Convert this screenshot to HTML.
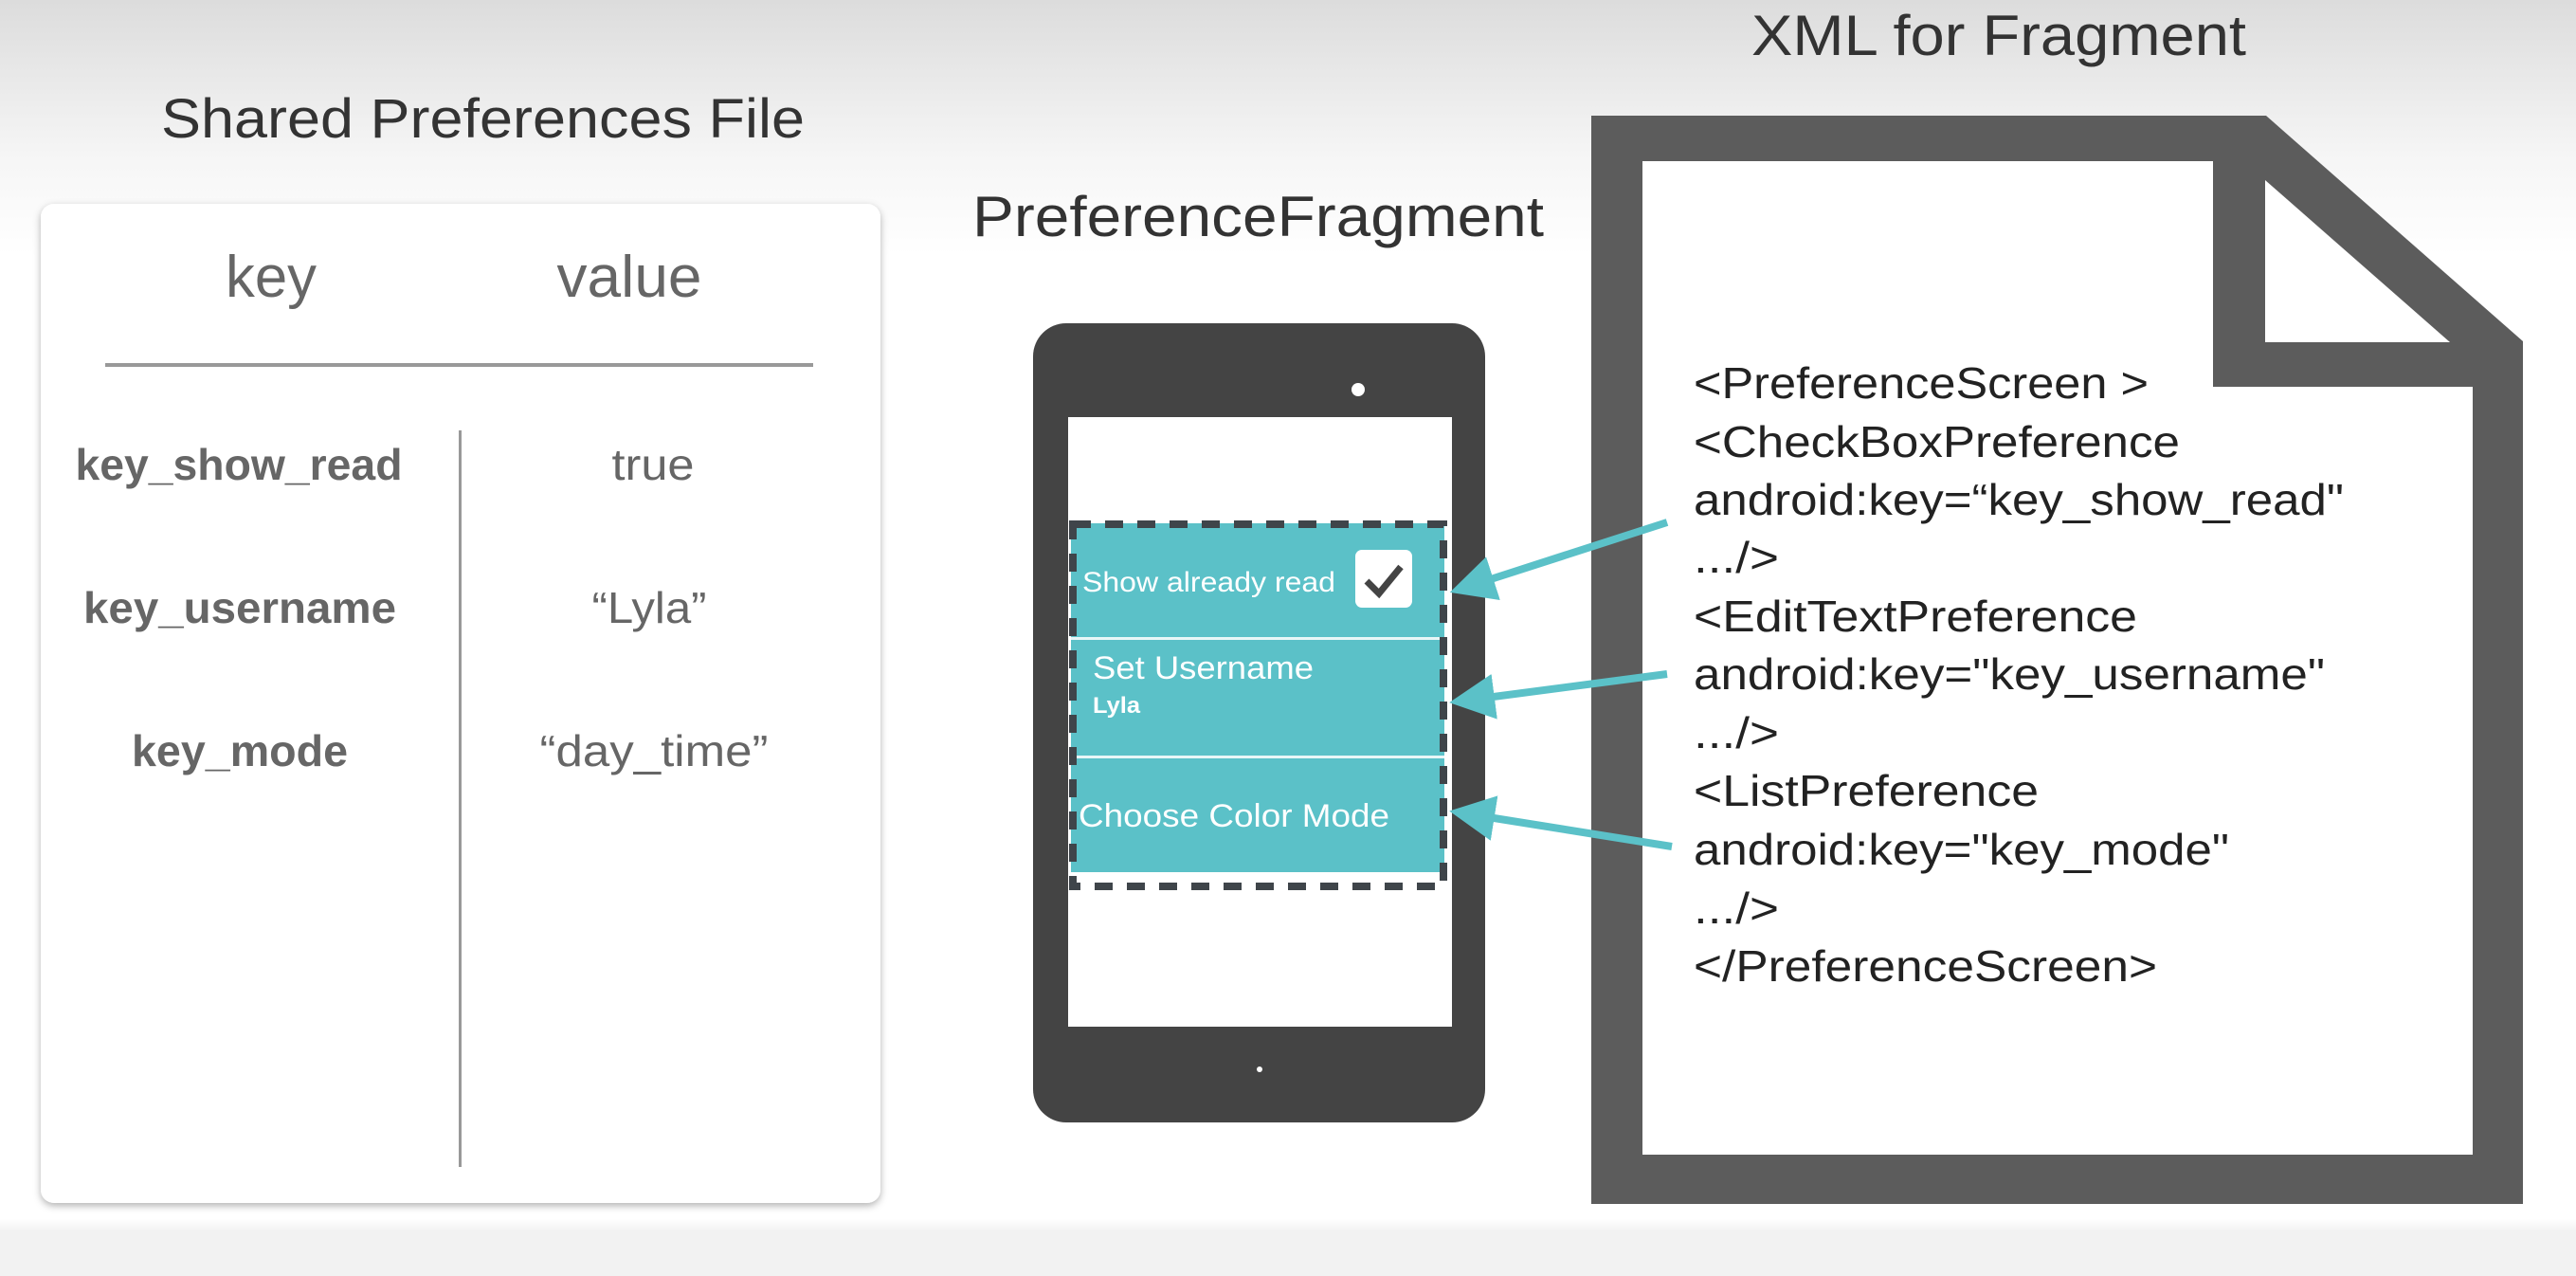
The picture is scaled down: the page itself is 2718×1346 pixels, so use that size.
<!DOCTYPE html>
<html><head><meta charset="utf-8"><style>
html,body{margin:0;padding:0;width:2718px;height:1346px;overflow:hidden;background:#fff}
svg{display:block}
text{font-family:"Liberation Sans",sans-serif}
</style></head><body>
<svg width="2718" height="1346" viewBox="0 0 2718 1346" xmlns="http://www.w3.org/2000/svg">
<defs>
<linearGradient id="bg" x1="0" y1="0" x2="0" y2="1">
<stop offset="0" stop-color="#dcdcdc"/><stop offset="0.12" stop-color="#f5f5f5"/><stop offset="0.2" stop-color="#ffffff"/>
<stop offset="0.955" stop-color="#ffffff"/><stop offset="0.965" stop-color="#f2f2f2"/><stop offset="1" stop-color="#f2f2f2"/>
</linearGradient>
<filter id="sh" x="-5%" y="-5%" width="110%" height="110%"><feDropShadow dx="0" dy="3" stdDeviation="4" flood-color="#000" flood-opacity="0.3"/></filter>
<marker id="ah" markerWidth="6" markerHeight="6" refX="4" refY="3" orient="auto" markerUnits="strokeWidth"><path d="M0,0 L6,3 L0,6 z" fill="#5bc1c8"/></marker>
</defs>
<rect width="2718" height="1346" fill="url(#bg)"/>

<text x="170" y="145" font-size="58" fill="#333" textLength="679" lengthAdjust="spacingAndGlyphs">Shared Preferences File</text>
<rect x="43" y="215" width="886" height="1054" rx="14" fill="#fff" filter="url(#sh)"/>
<g fill="#666">
<text x="286" y="313" font-size="62" text-anchor="middle" textLength="96" lengthAdjust="spacingAndGlyphs">key</text>
<text x="664" y="313" font-size="62" text-anchor="middle" textLength="153" lengthAdjust="spacingAndGlyphs">value</text>
<text x="252" y="506" font-size="46" font-weight="bold" text-anchor="middle" textLength="345" lengthAdjust="spacingAndGlyphs">key_show_read</text>
<text x="253" y="657" font-size="46" font-weight="bold" text-anchor="middle" textLength="330" lengthAdjust="spacingAndGlyphs">key_username</text>
<text x="253" y="808" font-size="46" font-weight="bold" text-anchor="middle" textLength="228" lengthAdjust="spacingAndGlyphs">key_mode</text>
<text x="689" y="506" font-size="46" text-anchor="middle" textLength="87" lengthAdjust="spacingAndGlyphs">true</text>
<text x="685" y="657" font-size="46" text-anchor="middle" textLength="121" lengthAdjust="spacingAndGlyphs">“Lyla”</text>
<text x="690" y="808" font-size="46" text-anchor="middle" textLength="241" lengthAdjust="spacingAndGlyphs">“day_time”</text>
</g>
<rect x="111" y="383" width="747" height="4" fill="#999"/>
<rect x="484" y="454" width="3" height="777" fill="#999"/>

<text x="1026" y="249" font-size="60" fill="#333" textLength="603" lengthAdjust="spacingAndGlyphs">PreferenceFragment</text>
<rect x="1090" y="341" width="477" height="843" rx="35" fill="#444"/>
<rect x="1127" y="440" width="405" height="643" fill="#fff"/>
<ellipse cx="1433" cy="411" rx="7" ry="7" fill="#fff"/>
<circle cx="1329" cy="1128" r="3" fill="#fff"/>
<rect x="1130" y="552" width="394" height="368" fill="#5bc1c8"/>
<rect x="1130" y="672" width="394" height="3" fill="#e8f6f7"/>
<rect x="1130" y="797" width="394" height="3" fill="#e8f6f7"/>
<rect x="1132" y="553" width="391" height="382" fill="none" stroke="#3f454a" stroke-width="8" stroke-dasharray="19 15"/>
<text x="1142" y="624" font-size="30" fill="#fff" textLength="267" lengthAdjust="spacingAndGlyphs">Show already read</text>
<rect x="1430" y="580" width="60" height="61" rx="7" fill="#fff"/>
<path d="M1442 613 L1455 626 L1478 598" fill="none" stroke="#444" stroke-width="7"/>
<text x="1153" y="716" font-size="34" fill="#fff" textLength="233" lengthAdjust="spacingAndGlyphs">Set Username</text>
<text x="1153" y="752" font-size="24" font-weight="bold" fill="#fff" textLength="50" lengthAdjust="spacingAndGlyphs">Lyla</text>
<text x="1138" y="872" font-size="34" fill="#fff" textLength="328" lengthAdjust="spacingAndGlyphs">Choose Color Mode</text>

<text x="1848" y="58" font-size="60" fill="#333" textLength="522" lengthAdjust="spacingAndGlyphs">XML for Fragment</text>
<polygon points="1679,122 2391,122 2662,360 2662,1270 1679,1270" fill="#5c5c5c"/>
<polygon points="1733,170 2335,170 2335,408 2609,408 2609,1218 1733,1218" fill="#fff"/>
<polygon points="2390,190 2390,361 2585,361" fill="#fff"/>
<g fill="#222" font-size="46">
<text x="1787" y="420" textLength="480" lengthAdjust="spacingAndGlyphs">&lt;PreferenceScreen &gt;</text>
<text x="1787" y="482" textLength="513" lengthAdjust="spacingAndGlyphs">&lt;CheckBoxPreference</text>
<text x="1787" y="543" textLength="686" lengthAdjust="spacingAndGlyphs">android:key=“key_show_read"</text>
<text x="1787" y="604" textLength="90" lengthAdjust="spacingAndGlyphs">.../&gt;</text>
<text x="1787" y="666" textLength="468" lengthAdjust="spacingAndGlyphs">&lt;EditTextPreference</text>
<text x="1787" y="727" textLength="666" lengthAdjust="spacingAndGlyphs">android:key="key_username"</text>
<text x="1787" y="789" textLength="90" lengthAdjust="spacingAndGlyphs">.../&gt;</text>
<text x="1787" y="850" textLength="364" lengthAdjust="spacingAndGlyphs">&lt;ListPreference</text>
<text x="1787" y="912" textLength="565" lengthAdjust="spacingAndGlyphs">android:key="key_mode"</text>
<text x="1787" y="974" textLength="90" lengthAdjust="spacingAndGlyphs">.../&gt;</text>
<text x="1787" y="1035" textLength="489" lengthAdjust="spacingAndGlyphs">&lt;/PreferenceScreen&gt;</text>
</g>
<g stroke="#5bc1c8" stroke-width="8" marker-end="url(#ah)">
<line x1="1759" y1="551" x2="1545" y2="620"/>
<line x1="1759" y1="711" x2="1545" y2="739"/>
<line x1="1764" y1="893" x2="1545" y2="858"/>
</g>
</svg>
</body></html>
